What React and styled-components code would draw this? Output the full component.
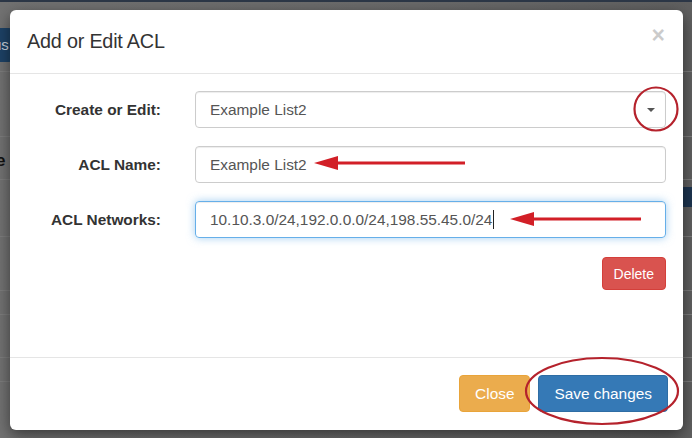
import React from 'react';
import styled, { createGlobalStyle } from 'styled-components';

const GlobalStyle = createGlobalStyle`
  html, body {
    margin: 0;
    padding: 0;
    background: #6a6a6a;
    overflow: hidden;
  }
  body {
    font-family: "Liberation Sans", Arial, Helvetica, sans-serif;
  }
`;

const Page = styled.div`
  position: relative;
  width: 692px;
  height: 438px;
  overflow: hidden;
  background: linear-gradient(90deg, #727272 0%, #6a6a6a 60%, #606060 100%);
`;

/* dimmed page behind the modal */
const Backdrop = styled.div`
  display: flex;
  flex-direction: column;
  width: 100%;
`;
const TopStrip = styled.div`
  height: 2px;
  background: #2c3747;
`;
const BgRow = styled.div`
  height: ${p => p.$h}px;
  border-bottom: 1px solid #7d7d7d;
  box-sizing: border-box;
  display: flex;
  justify-content: space-between;
  align-items: ${p => p.$align || 'center'};
`;
const BgButton = styled.div`
  margin-top: 26px;
  width: 12px;
  height: 34px;
  background: #1d4266;
  border-radius: 0 3px 3px 0;
  color: #c9d3de;
  font-size: 15px;
  line-height: 34px;
  overflow: hidden;
  text-indent: -7px;
`;
const BgText = styled.div`
  font-weight: bold;
  color: #111;
  font-size: 17px;
  margin-left: -4px;
  margin-top: 6px;
`;
const BgTag = styled.div`
  margin-left: auto;
  width: 12px;
  height: 20px;
  background: #1d3550;
  border-radius: 4px 0 0 4px;
  margin-top: -22px;
`;

/* modal */
const Modal = styled.div`
  position: absolute;
  top: 10px;
  left: 10px;
  width: 673px;
  height: 420px;
  background: #fff;
  border-radius: 6px;
  box-shadow: 0 5px 15px rgba(0, 0, 0, 0.5);
  display: flex;
  flex-direction: column;
  overflow: hidden;
`;
const Header = styled.div`
  height: 63px;
  border-bottom: 1px solid #e5e5e5;
  display: flex;
  align-items: center;
  justify-content: space-between;
  padding: 0 17px;
  flex-shrink: 0;
`;
const Title = styled.h4`
  margin: 0;
  font-size: 19.8px;
  font-weight: normal;
  color: #333;
  letter-spacing: -0.2px;
`;
const CloseX = styled.span`
  font-size: 23px;
  font-weight: bold;
  color: #000;
  opacity: 0.2;
  margin-top: -13px;
  margin-right: 1px;
  line-height: 1;
`;
const Body = styled.div`
  flex: 1;
  padding: 17px 17px 0 17px;
  display: flex;
  flex-direction: column;
  gap: 18px;
`;
const FormRow = styled.div`
  display: flex;
  align-items: center;
`;
const Label = styled.label`
  width: 134px;
  flex-shrink: 0;
  text-align: right;
  font-weight: bold;
  font-size: 15.4px;
  color: #333;
  margin-right: 34px;
`;
const Field = styled.div`
  flex: 1;
  height: 37px;
  box-sizing: border-box;
  border: 1px solid ${p => (p.$focus ? '#66afe9' : '#ccc')};
  border-radius: 4px;
  box-shadow: ${p =>
    p.$focus
      ? 'inset 0 1px 1px rgba(0,0,0,.075), 0 0 8px rgba(102,175,233,.6)'
      : 'inset 0 1px 1px rgba(0,0,0,.075)'};
  padding: 0 14px;
  display: flex;
  align-items: center;
  font-size: 15.4px;
  color: #555;
`;
const Caret = styled.span`
  margin-left: auto;
  margin-right: -4px;
  width: 0;
  height: 0;
  border-left: 4px solid transparent;
  border-right: 4px solid transparent;
  border-top: 4px solid #555;
`;
const TextCursor = styled.span`
  display: inline-block;
  width: 1px;
  height: 19px;
  background: #222;
  margin-left: 1px;
`;
const ActionRow = styled.div`
  display: flex;
  justify-content: flex-end;
  margin-top: 1px;
`;
const Button = styled.button`
  font-family: inherit;
  height: ${p => (p.$small ? 33 : 37)}px;
  padding: 0 ${p => (p.$small ? 11 : 15)}px;
  font-size: ${p => (p.$small ? 14 : 15.4)}px;
  color: #fff;
  border-radius: 4px;
  border: 1px solid ${p => p.$border};
  background: ${p => p.$bg};
  cursor: pointer;
`;
const Footer = styled.div`
  height: 73px;
  box-sizing: border-box;
  border-top: 1px solid #e5e5e5;
  display: flex;
  justify-content: flex-end;
  align-items: center;
  gap: 8px;
  padding: 0 15px 1px 0;
  flex-shrink: 0;
`;

const Annotations = styled.svg`
  position: absolute;
  top: 0;
  left: 0;
  pointer-events: none;
`;

const ARROW_RED = '#d21f27';
const RING_RED = '#b5222c';

function Arrow({ tip, end, y }) {
  return (
    <g>
      <line x1={tip + 20} y1={y} x2={end} y2={y} stroke={ARROW_RED} strokeWidth="3" />
      <polygon points={`${tip},${y} ${tip + 24},${y - 7} ${tip + 24},${y + 7}`} fill={ARROW_RED} />
    </g>
  );
}

export default function App() {
  return (
    <Page>
      <GlobalStyle />
      <Backdrop>
        <TopStrip />
        <BgRow $h={70} $align="flex-start"><BgButton>us</BgButton></BgRow>
        <BgRow $h={65} />
        <BgRow $h={43}><BgText>e</BgText></BgRow>
        <BgRow $h={57}><BgTag /></BgRow>
        <BgRow $h={54} />
        <BgRow $h={24} />
        <BgRow $h={43} />
        <BgRow $h={24} />
      </Backdrop>

      <Modal>
        <Header>
          <Title>Add or Edit ACL</Title>
          <CloseX>×</CloseX>
        </Header>
        <Body>
          <FormRow>
            <Label>Create or Edit:</Label>
            <Field>
              Example List2
              <Caret />
            </Field>
          </FormRow>
          <FormRow>
            <Label>ACL Name:</Label>
            <Field>Example List2</Field>
          </FormRow>
          <FormRow>
            <Label>ACL Networks:</Label>
            <Field $focus>
              10.10.3.0/24,192.0.0.0/24,198.55.45.0/24
              <TextCursor />
            </Field>
          </FormRow>
          <ActionRow>
            <Button $small $bg="#d9534f" $border="#d43f3a">Delete</Button>
          </ActionRow>
        </Body>
        <Footer>
          <Button $bg="#ebac4d" $border="#e9a43a">Close</Button>
          <Button $bg="#3579b6" $border="#2e6da4">Save changes</Button>
        </Footer>
      </Modal>

      <Annotations width="692" height="438" viewBox="0 0 692 438">
        <circle cx="656" cy="109" r="21.5" fill="none" stroke={RING_RED} strokeWidth="2.2" />
        <ellipse cx="602" cy="391" rx="76" ry="33" fill="none" stroke={RING_RED} strokeWidth="2.2" />
        <Arrow tip={314} end={465} y={163} />
        <Arrow tip={510} end={641} y={219} />
      </Annotations>
    </Page>
  );
}
